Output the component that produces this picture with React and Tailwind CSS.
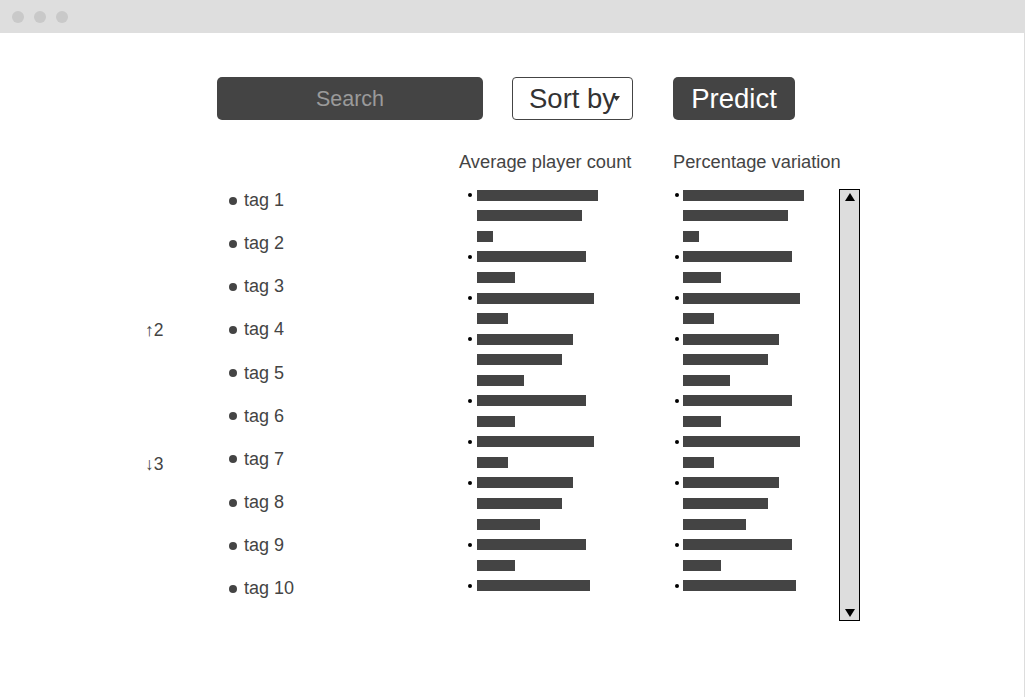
import React from 'react';

const groups = [
  [121, 105, 16],
  [109, 38],
  [117, 31],
  [96, 85, 47],
  [109, 38],
  [117, 31],
  [96, 85, 63],
  [109, 38],
  [113],
];

const tags = [
  { name: 'tag 1' },
  { name: 'tag 2' },
  { name: 'tag 3' },
  { name: 'tag 4', change: '↑2' },
  { name: 'tag 5' },
  { name: 'tag 6' },
  { name: 'tag 7', change: '↓3', low: true },
  { name: 'tag 8' },
  { name: 'tag 9' },
  { name: 'tag 10' },
];

function BarList({ dotClass }) {
  return (
    <div className="flex flex-col">
      {groups.map((group, gi) =>
        group.map((w, i) => (
          <div key={`${gi}-${i}`} className="flex h-[20.55px] items-center">
            <div className={`h-[4px] w-[4px] rounded-full ${i === 0 ? 'bg-black' : 'bg-transparent'} ${dotClass}`} />
            <div className="h-[11px] bg-[#444444]" style={{ width: w }} />
          </div>
        ))
      )}
    </div>
  );
}

export default function App() {
  return (
    <div
      className="min-h-[697px] w-full bg-white text-[#444444]"
      style={{ fontFamily: '"Liberation Sans", Arial, sans-serif' }}
    >
      {/* window bar */}
      <div className="flex h-[33px] items-center gap-[10px] bg-[#dedede] pl-[12px]">
        <div className="h-[12px] w-[12px] rounded-full bg-[#c9c9c9]" />
        <div className="h-[12px] w-[12px] rounded-full bg-[#c9c9c9]" />
        <div className="h-[12px] w-[12px] rounded-full bg-[#c9c9c9]" />
      </div>

      <div className="min-h-[664px] border-r border-[#dddddd]">
        {/* toolbar */}
        <div className="flex items-center pl-[217px] pt-[44px]">
          <div className="flex h-[43px] w-[266px] items-center justify-center rounded-[5px] bg-[#444444] pt-[2px] text-[21.5px] text-[#9a9a9a]">
            Search
          </div>
          <div className="ml-[29px] flex h-[43px] w-[121px] items-center rounded-[4px] border border-[#444444] bg-white pl-[16px] pt-[1px] text-[27.5px] text-[#333333]">
            <span>Sort by</span>
            <svg width="7" height="5" viewBox="0 0 7 5" className="-ml-[3px] mt-[-2px]">
              <polygon points="0,0 7,0 3.5,5" fill="#333333" />
            </svg>
          </div>
          <div className="ml-[40px] flex h-[43px] w-[122px] items-center justify-center rounded-[5px] bg-[#444444] pt-[1px] text-[27.5px] text-white">
            Predict
          </div>
        </div>

        {/* content */}
        <div className="flex pl-[145px] pt-[30px]">
          <div className="w-[314px] pt-[29px]">
            {tags.map((t) => (
              <div key={t.name} className="flex h-[43.15px] items-center text-[18px]">
                <div className={`w-[84px] text-[17.5px] ${t.low ? 'pt-[9px]' : ''}`}>{t.change || ''}</div>
                <div className="h-[8px] w-[8px] rounded-full bg-[#444444]" />
                <span className="ml-[7px]">{t.name}</span>
              </div>
            ))}
          </div>

          <div className="w-[214px]">
            <div className="h-[22px] whitespace-nowrap pt-[1px] text-[18.3px] leading-[21px]">Average player count</div>
            <div className="mt-[13px]">
              <BarList dotClass="ml-[9px] mr-[5px]" />
            </div>
          </div>

          <div className="w-[166px]">
            <div className="h-[22px] whitespace-nowrap pt-[1px] text-[18.3px] leading-[21px]">Percentage variation</div>
            <div className="mt-[13px]">
              <BarList dotClass="ml-[2px] mr-[4px]" />
            </div>
          </div>

          <div className="mt-[39px] flex h-[432px] w-[21px] flex-col items-center justify-between border border-black bg-[#dddddd] py-[3px]">
            <svg width="10" height="8" viewBox="0 0 10 8">
              <polygon points="5,0 10,8 0,8" fill="#000000" />
            </svg>
            <svg width="10" height="8" viewBox="0 0 10 8">
              <polygon points="0,0 10,0 5,8" fill="#000000" />
            </svg>
          </div>
        </div>
      </div>
    </div>
  );
}
